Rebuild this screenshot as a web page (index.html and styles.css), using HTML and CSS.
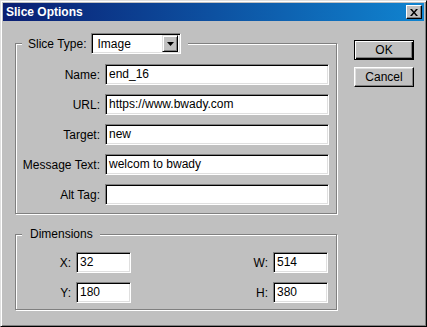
FILE: index.html
```html
<!DOCTYPE html>
<html lang="en">
<head>
    <meta charset="UTF-8">
    <title>Slice Options</title>
    <link rel="stylesheet" href="styles.css">
</head>
<body>
    <div class="window">
        <div class="title-bar">
            <span class="title">Slice Options</span>
            <span class="close-btn">
                <svg width="8" height="7" viewBox="0 0 8 7"><path d="M0 0h2l2 2.5L6 0h2L5 3.5 8 7H6L4 4.5 2 7H0l3-3.5z" fill="#000"/></svg>
            </span>
        </div>

        <div class="dialog-body">
            <div class="groups">
                <fieldset class="group slice-group">
                    <legend class="legend-select">
                        <span>Slice Type:</span>
                        <span class="select">
                            <span class="select-value">Image</span>
                            <span class="select-arrow">
                                <svg width="7" height="4" viewBox="0 0 7 4"><path d="M0 0h7L3.5 4z" fill="#000"/></svg>
                            </span>
                        </span>
                    </legend>
                    <div class="form-grid">
                        <label>Name:</label>
                        <div class="field">end_16</div>
                        <label>URL:</label>
                        <div class="field">https://www.bwady.com</div>
                        <label>Target:</label>
                        <div class="field">new</div>
                        <label>Message Text:</label>
                        <div class="field">welcom to bwady</div>
                        <label>Alt Tag:</label>
                        <div class="field"></div>
                    </div>
                </fieldset>

                <fieldset class="group dim-group">
                    <legend class="legend-text">Dimensions</legend>
                    <div class="dim-grid">
                        <label>X:</label>
                        <div class="field">32</div>
                        <span></span>
                        <label>W:</label>
                        <div class="field">514</div>
                        <label>Y:</label>
                        <div class="field">180</div>
                        <span></span>
                        <label>H:</label>
                        <div class="field">380</div>
                    </div>
                </fieldset>
            </div>

            <div class="buttons">
                <button class="btn default">OK</button>
                <button class="btn">Cancel</button>
            </div>
        </div>
    </div>
</body>
</html>
```

FILE: styles.css
```css
body {
    margin: 0;
    background: #c0c0c0;
    font-family: "Liberation Sans", Arial, sans-serif;
    font-size: 12px;
    color: #000;
}
.window {
    width: 427px;
    height: 327px;
    box-sizing: border-box;
    background: #c0c0c0;
    border: 1px solid;
    border-color: #dfdfdf #000 #000 #dfdfdf;
    box-shadow: inset 1px 1px #fff, inset -1px -1px #808080;
    padding: 2px;
}
.title-bar {
    height: 18px;
    display: flex;
    align-items: center;
    justify-content: space-between;
    padding: 0 2px 0 3px;
    background: linear-gradient(90deg, #0a1e72, #1084d0);
}
.title {
    color: #fff;
    font-weight: bold;
    font-size: 12px;
}
.close-btn {
    width: 16px;
    height: 14px;
    box-sizing: border-box;
    display: flex;
    align-items: center;
    justify-content: center;
    background: #c0c0c0;
    border: 1px solid;
    border-color: #fff #000 #000 #fff;
    box-shadow: inset -1px -1px #808080;
}
.dialog-body {
    display: flex;
    gap: 17px;
    padding: 12px 0 0 12px;
}
.groups {
    display: flex;
    flex-direction: column;
}
.group {
    width: 322px;
    box-sizing: border-box;
    margin: 0;
    border: 1px solid #808080;
    box-shadow: inset 1px 1px #fff, 1px 1px #fff;
}
.slice-group {
    padding: 10px 7px 8px 0;
}
.dim-group {
    margin-top: 13px;
    padding: 10px 8px 6px 0;
}
.legend-select {
    display: flex;
    align-items: center;
    gap: 5px;
    margin-left: 6px;
    padding: 0 7px 0 6px;
    background: #c0c0c0;
}
.legend-text {
    margin-left: 6px;
    padding: 0 7px 0 8px;
    line-height: 15px;
    background: #c0c0c0;
}
.select {
    width: 90px;
    height: 21px;
    box-sizing: border-box;
    display: flex;
    align-items: center;
    justify-content: space-between;
    background: #fff;
    border: 1px solid;
    border-color: #808080 #fff #fff #808080;
    box-shadow: inset 1px 1px #000, inset -1px -1px #dfdfdf;
    padding: 2px;
}
.select-value {
    padding-left: 3px;
}
.select-arrow {
    width: 16px;
    height: 17px;
    box-sizing: border-box;
    display: flex;
    align-items: center;
    justify-content: center;
    background: #c0c0c0;
    border: 1px solid;
    border-color: #dfdfdf #000 #000 #dfdfdf;
    box-shadow: inset 1px 1px #fff, inset -1px -1px #808080;
}
.form-grid {
    display: grid;
    grid-template-columns: 84px 1fr;
    column-gap: 5px;
    row-gap: 9px;
    align-items: center;
}
.dim-grid {
    display: grid;
    grid-template-columns: 55px 55px 1fr 30px 55px;
    column-gap: 5px;
    row-gap: 9px;
    align-items: center;
}
label {
    text-align: right;
}
.field {
    height: 21px;
    box-sizing: border-box;
    background: #fff;
    border: 1px solid;
    border-color: #808080 #fff #fff #808080;
    box-shadow: inset 1px 1px #000, inset -1px -1px #dfdfdf;
    padding: 0 3px;
    line-height: 19px;
    white-space: nowrap;
}
.buttons {
    display: flex;
    flex-direction: column;
    gap: 7px;
    padding-top: 7px;
}
.btn {
    width: 60px;
    height: 20px;
    box-sizing: border-box;
    padding: 0;
    font-family: inherit;
    font-size: 12px;
    color: #000;
    background: #c0c0c0;
    border: 1px solid;
    border-color: #fff #000 #000 #fff;
    box-shadow: inset -1px -1px #808080, inset 1px 1px #dfdfdf;
}
.btn.default {
    border-color: #000;
    box-shadow: inset 1px 1px #fff, inset -1px -1px #000, inset -2px -2px #808080;
}
```
